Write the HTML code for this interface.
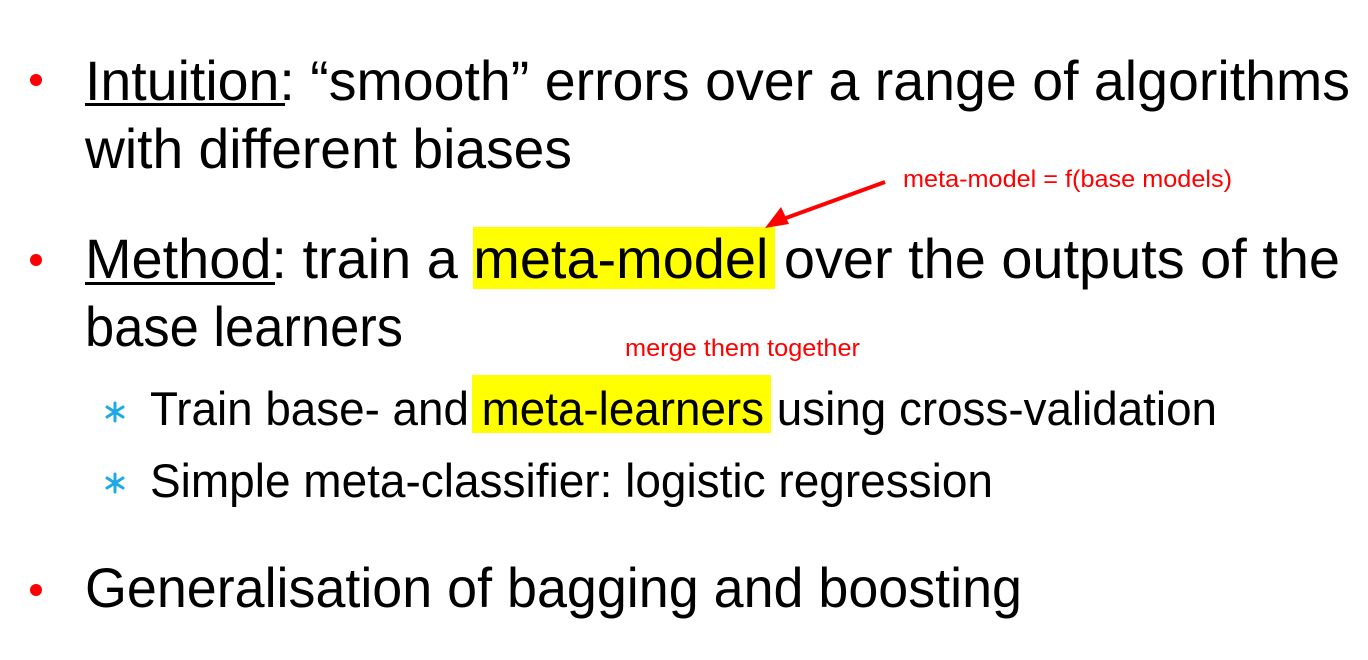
<!DOCTYPE html>
<html><head><meta charset="utf-8"><style>html,body{margin:0;padding:0;background:#fff}svg{display:block}</style></head>
<body>
<svg width="1368" height="660" viewBox="0 0 1368 660" xmlns="http://www.w3.org/2000/svg" font-family="Liberation Sans, sans-serif">
<rect width="1368" height="660" fill="#fff"/>
<rect x="473" y="227" width="302" height="62" fill="#ffff00"/>
<rect x="472" y="375" width="299" height="58" fill="#ffff00"/>
<g fill="#000" font-size="56">
<text x="85" y="100" textLength="1265" lengthAdjust="spacingAndGlyphs">Intuition: “smooth” errors over a range of algorithms</text>
<text x="85" y="168" textLength="487" lengthAdjust="spacingAndGlyphs">with different biases</text>
<text x="85" y="278" textLength="1255" lengthAdjust="spacingAndGlyphs">Method: train a meta-model over the outputs of the</text>
<text x="85" y="346" textLength="318" lengthAdjust="spacingAndGlyphs">base learners</text>
<text x="85" y="607" textLength="937" lengthAdjust="spacingAndGlyphs">Generalisation of bagging and boosting</text>
</g>
<g fill="#000" font-size="47">
<text x="150" y="425" textLength="1067" lengthAdjust="spacingAndGlyphs">Train base- and meta-learners using cross-validation</text>
<text x="150" y="497" textLength="843" lengthAdjust="spacingAndGlyphs">Simple meta-classifier: logistic regression</text>
</g>
<rect x="85" y="103" width="200" height="3" fill="#000"/>
<rect x="85" y="282" width="190" height="3" fill="#000"/>
<g fill="#f00"><circle cx="36" cy="80" r="6"/><circle cx="36" cy="260" r="6"/><circle cx="36" cy="590" r="6"/></g>
<g stroke="#1ea8e6" stroke-width="3" stroke-linecap="round">
<path d="M115 403v18M107 407l16 10M107 417l16-10"/>
<path d="M115 474v18M107 478l16 10M107 488l16-10"/>
</g>
<g fill="#f00" font-size="24">
<text x="903" y="187" textLength="329" lengthAdjust="spacingAndGlyphs">meta-model = f(base models)</text>
<text x="625" y="356" textLength="235" lengthAdjust="spacingAndGlyphs">merge them together</text>
</g>
<line x1="885" y1="182" x2="775" y2="222" stroke="#f00" stroke-width="4"/>
<polygon points="765,228 781,207 789,224" fill="#f00"/>
</svg>
</body></html>
